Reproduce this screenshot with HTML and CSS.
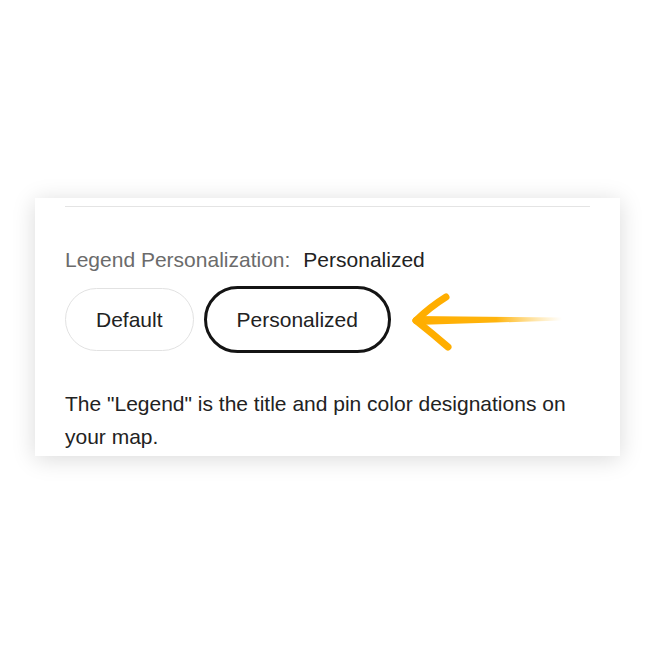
FILE: index.html
```html
<!DOCTYPE html>
<html>
<head>
<meta charset="utf-8">
<link rel="stylesheet" href="styles.css">
</head>
<body>
<div class="stage">
  <div class="card">
    <div class="divider"></div>
    <div class="row">
      <span class="label">Legend Personalization:</span>
      <span class="value">Personalized</span>
    </div>
    <div class="buttons">
      <button class="btn">Default</button>
      <button class="btn selected">Personalized</button>
      <svg class="arrow" width="160" height="62" viewBox="0 0 160 62">
        <defs>
          <linearGradient id="fade" x1="0" y1="0" x2="1" y2="0">
            <stop offset="0" stop-color="#FFAE00" stop-opacity="1"/>
            <stop offset="0.55" stop-color="#FFB000" stop-opacity="0.95"/>
            <stop offset="1" stop-color="#FFC640" stop-opacity="0"/>
          </linearGradient>
        </defs>
        <path d="M6 27 L152 28.5 L152 31.5 L6 36 Z" fill="url(#fade)"/>
        <path d="M6 31.5 Q20 18 36 8" fill="none" stroke="#FFAE00" stroke-width="7" stroke-linecap="round"/>
        <path d="M6 31.5 Q23 45 38 58" fill="none" stroke="#FFAE00" stroke-width="7" stroke-linecap="round"/>
      </svg>
    </div>
    <p class="desc">The "Legend" is the title and pin color designations on your map.</p>
  </div>
</div>
</body>
</html>
```
FILE: styles.css
```css
html, body {
  margin: 0;
  padding: 0;
  background: #ffffff;
}
.stage {
  box-sizing: border-box;
  min-height: 655px;
  padding-top: 198px;
  padding-left: 35px;
  padding-bottom: 40px;
}
.card {
  box-sizing: border-box;
  width: 585px;
  height: 258px;
  background: #ffffff;
  box-shadow: 0 3px 22px rgba(0, 0, 0, 0.15);
  padding: 8px 30px 0;
  overflow: hidden;
  font-family: "Liberation Sans", Arial, sans-serif;
  font-size: 21px;
}
.divider {
  height: 1px;
  background: #e4e4e4;
}
.row {
  margin-top: 41px;
  display: flex;
  gap: 13px;
  line-height: 24px;
}
.label {
  color: #6b6b6b;
}
.value {
  color: #222222;
}
.buttons {
  margin-top: 14px;
  display: flex;
  align-items: center;
  gap: 10px;
}
.btn {
  font-family: inherit;
  font-size: 21px;
  color: #222222;
  background: #ffffff;
  border: 1px solid #e2e2e2;
  border-radius: 40px;
  height: 63px;
  line-height: 61px;
  padding: 0 30px;
  margin: 0;
}
.btn.selected {
  border: 3px solid #141414;
  height: 67px;
  line-height: 61px;
}
.arrow {
  margin-left: 9px;
  display: block;
}
.desc {
  margin: 34px 0 0;
  color: #222222;
  line-height: 33px;
}
```
